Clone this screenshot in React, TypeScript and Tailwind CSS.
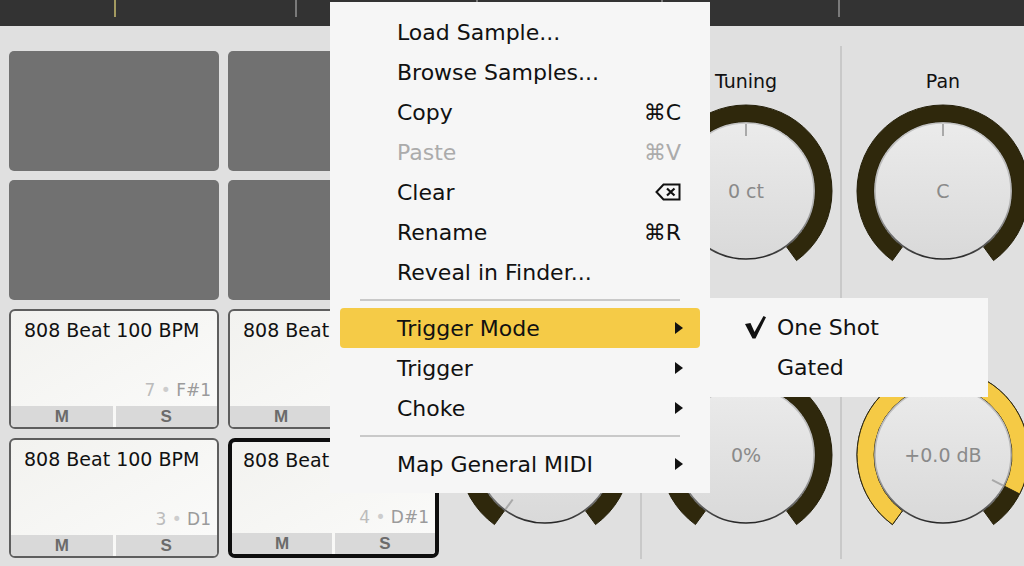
import React from "react";

// knob geometry (degrees measured clockwise from 12 o'clock)
const C = 90;
const R_OUT = 86;
const R_IN = 69;
const MIN_DEG = 216;
const SWEEP = 288;

const polar = (r: number, deg: number): [number, number] => {
  const a = (deg * Math.PI) / 180;
  return [C + r * Math.sin(a), C - r * Math.cos(a)];
};

// ring sector between two angles, cut radially at both ends
const ringPath = (a0: number, a1: number) => {
  const [x0, y0] = polar(R_OUT, a0);
  const [x1, y1] = polar(R_OUT, a1);
  const [x2, y2] = polar(R_IN, a1);
  const [x3, y3] = polar(R_IN, a0);
  const large = a1 - a0 > 180 ? 1 : 0;
  return `M${x0} ${y0} A${R_OUT} ${R_OUT} 0 ${large} 1 ${x1} ${y1} L${x2} ${y2} A${R_IN} ${R_IN} 0 ${large} 0 ${x3} ${y3} Z`;
};

interface KnobProps {
  text?: string;
  tick?: number; // 0..1 position of the pointer
  amount?: number; // 0..1 filled part of the ring
}

const Knob = ({ text, tick, amount }: KnobProps) => {
  const tickDeg = tick === undefined ? undefined : MIN_DEG + SWEEP * tick;
  const t1 = tickDeg === undefined ? null : polar(67, tickDeg);
  const t2 = tickDeg === undefined ? null : polar(55, tickDeg);

  return (
    <svg width={180} height={180} viewBox="0 0 180 180" className="block">
      <defs>
        <linearGradient id="knob-face" x1="0" y1="0" x2="0" y2="1">
          <stop offset="0" stopColor="#ebebeb" />
          <stop offset="1" stopColor="#d9d9d9" />
        </linearGradient>
        <linearGradient id="knob-rim" x1="0" y1="0" x2="0" y2="1">
          <stop offset="0" stopColor="#c4c4c4" />
          <stop offset="0.6" stopColor="#b4b4b4" />
          <stop offset="0.85" stopColor="#6a6a6a" />
          <stop offset="1" stopColor="#262626" />
        </linearGradient>
      </defs>
      <path d={ringPath(MIN_DEG, MIN_DEG + SWEEP)} fill="#2f280c" stroke="#241f09" strokeWidth={1} />
      {amount ? (
        <path
          d={ringPath(MIN_DEG, MIN_DEG + SWEEP * amount)}
          fill="#f5ca45"
          stroke="#2b2713"
          strokeWidth={1}
        />
      ) : null}
      <circle cx={C} cy={C} r={68} fill="url(#knob-face)" stroke="url(#knob-rim)" strokeWidth={1.6} />
      {t1 && t2 ? (
        <line x1={t1[0]} y1={t1[1]} x2={t2[0]} y2={t2[1]} stroke="#a9a9a9" strokeWidth={2} />
      ) : null}
      {text ? (
        <text
          x={C}
          y={C + 7}
          textAnchor="middle"
          fontSize={19}
          fill="#8a8a8a"
          fontFamily="DejaVu Sans, sans-serif"
        >
          {text}
        </text>
      ) : null}
    </svg>
  );
};

// label row keeps its height even when the label sits under the menu
const KnobCell = ({ label, ...knob }: KnobProps & { label?: string }) => (
  <div className="flex flex-col items-center">
    <span className="h-[24px] text-[19px] leading-[24px] text-[#111]">{label}</span>
    <div className="mt-[8px]">
      <Knob {...knob} />
    </div>
  </div>
);

interface PadProps {
  name: string;
  num?: string;
  note?: string;
  selected?: boolean;
}

const SamplePad = ({ name, num, note, selected }: PadProps) => (
  <div
    className={`flex h-[120px] flex-col overflow-hidden bg-gradient-to-br from-[#f2f2ef] to-[#fbfbfa] ${
      selected ? "rounded-[7px] border-4 border-[#0e0e0e]" : "rounded-[6px] border-2 border-[#5e5e5e]"
    }`}
  >
    <div className={`${selected ? "pl-[11px] pt-[6px]" : "pl-[13px] pt-[7px]"} text-[19px] leading-[24px] text-[#111] whitespace-nowrap`}>
      {name}
    </div>
    <div className="mt-auto mb-[6px] flex h-[20px] justify-end pr-[6px] text-[17px] leading-[20px] whitespace-pre">
      {note ? (
        <>
          <span className="text-[#bcbcbc]">{num}</span>
          <span className="text-[#cdcdcd]"> • </span>
          <span className="text-[#9b9b9b]">{note}</span>
        </>
      ) : null}
    </div>
    <div className="flex h-[21px] gap-[3px] font-['Liberation_Sans',sans-serif] text-[17px] font-bold text-[#6b6b6b]">
      <div className="flex flex-1 items-center justify-center bg-[#d9d9d9]">M</div>
      <div className="flex flex-1 items-center justify-center bg-[#d9d9d9]">S</div>
    </div>
  </div>
);

const EmptyPad = () => <div className="h-[120px] rounded-[5px] bg-[#717171]" />;

const EraseIcon = () => (
  <svg width={26} height={18} viewBox="0 0 26 18" className="block">
    <path d="M8.5 1.5H24.5V16.5H8.5L1.5 9Z" fill="none" stroke="#111" strokeWidth={2} strokeLinejoin="miter" />
    <path d="M12 5.5L19.5 12.5M19.5 5.5L12 12.5" stroke="#111" strokeWidth={2.2} />
  </svg>
);

const Arrow = () => (
  <svg width={8} height={12} viewBox="0 0 8 12" className="block">
    <path d="M0 0L8 6L0 12Z" fill="#111" />
  </svg>
);

const Check = () => (
  <svg width={21} height={23} viewBox="0 0 21 23" className="block">
    <path d="M0 8L5.5 7L9.5 16L18.5 0L21 1.2L10.5 22.5H7.5Z" fill="#111" />
  </svg>
);

type MenuEntry =
  | { label: string; shortcut?: React.ReactNode; sub?: boolean; disabled?: boolean; active?: boolean }
  | "sep";

const menuItems: MenuEntry[] = [
  { label: "Load Sample..." },
  { label: "Browse Samples..." },
  { label: "Copy", shortcut: "⌘C" },
  { label: "Paste", shortcut: "⌘V", disabled: true },
  { label: "Clear", shortcut: <EraseIcon /> },
  { label: "Rename", shortcut: "⌘R" },
  { label: "Reveal in Finder..." },
  "sep",
  { label: "Trigger Mode", sub: true, active: true },
  { label: "Trigger", sub: true },
  { label: "Choke", sub: true },
  "sep",
  { label: "Map General MIDI", sub: true },
];

export default function App() {
  return (
    <div className="relative h-[566px] w-[1024px] overflow-hidden bg-[#e0e0e0] font-['DejaVu_Sans',sans-serif]">
      {/* ruler strip */}
      <div className="flex h-[26px] items-start bg-[#333333]">
        <div className="ml-[114px] h-[17px] w-[2px] bg-[#a39a60]" />
        <div className="ml-[179px] h-[17px] w-[2px] bg-[#7a7a7a]" />
        <div className="ml-[179px] h-[17px] w-[2px] bg-[#7a7a7a]" />
        <div className="ml-[183px] h-[17px] w-[2px] bg-[#7a7a7a]" />
        <div className="ml-[175px] h-[17px] w-[2px] bg-[#7a7a7a]" />
      </div>

      <div className="flex">
        {/* pad grid */}
        <div className="w-[449px] shrink-0 pl-[9px] pt-[25px]">
          <div className="grid grid-cols-[210px_211px] gap-[9px]">
            <EmptyPad />
            <EmptyPad />
            <EmptyPad />
            <EmptyPad />
            <SamplePad name="808 Beat 100 BPM" num="7" note="F#1" />
            <SamplePad name="808 Beat 100 BPM" />
            <SamplePad name="808 Beat 100 BPM" num="3" note="D1" />
            <SamplePad name="808 Beat 100 BPM" num="4" note="D#1" selected />
          </div>
        </div>

        {/* pad controls */}
        <div className="flex shrink-0 pt-[20px]">
          <div className="flex h-[513px] w-[191px] shrink-0 flex-col pt-[23px]">
            <KnobCell tick={0} />
            <div className="mt-[52px]">
              <KnobCell tick={0} />
            </div>
          </div>
          <div className="h-[513px] w-[2px] shrink-0 bg-[#c9c9c9]" />
          <div className="flex h-[513px] w-[198px] shrink-0 flex-col pl-[10px] pt-[23px]">
            <KnobCell label="Tuning" text="0 ct" tick={0.5} />
            <div className="mt-[52px]">
              <KnobCell text="0%" />
            </div>
          </div>
          <div className="h-[513px] w-[2px] shrink-0 bg-[#c9c9c9]" />
          <div className="flex h-[513px] w-[202px] shrink-0 flex-col pt-[23px]">
            <KnobCell label="Pan" text="C" tick={0.5} />
            <div className="mt-[52px]">
              <KnobCell text="+0.0 dB" tick={0.906} amount={0.906} />
            </div>
          </div>
        </div>
      </div>

      {/* context menu */}
      <div className="absolute left-[330px] top-[2px] h-[491px] w-[380px] bg-[#f6f6f6] pt-[10px] text-[22px]">
        {menuItems.map((e, i) =>
          e === "sep" ? (
            <div key={i} className="mx-[30px] my-[7px] h-[2px] bg-[#c9c9c9]" />
          ) : (
            <div
              key={i}
              className={`mx-[10px] flex h-[40px] items-center justify-between rounded-[4px] pl-[57px] ${
                e.sub ? "pr-[17px]" : "pr-[19px]"
              } ${e.active ? "bg-[#f5cb47]" : ""} ${e.disabled ? "text-[#ababab]" : "text-[#111]"}`}
            >
              <span className="whitespace-nowrap">{e.label}</span>
              {e.sub ? <Arrow /> : e.shortcut ? <span>{e.shortcut}</span> : null}
            </div>
          )
        )}
      </div>

      {/* trigger mode submenu */}
      <div className="absolute left-[710px] top-[298px] h-[99px] w-[278px] bg-[#f6f6f6] pt-[9px] text-[22px] text-[#111]">
        <div className="flex h-[40px] items-center">
          <div className="ml-[35px] w-[32px]">
            <Check />
          </div>
          <span>One Shot</span>
        </div>
        <div className="flex h-[40px] items-center pl-[67px]">
          <span>Gated</span>
        </div>
      </div>
    </div>
  );
}
